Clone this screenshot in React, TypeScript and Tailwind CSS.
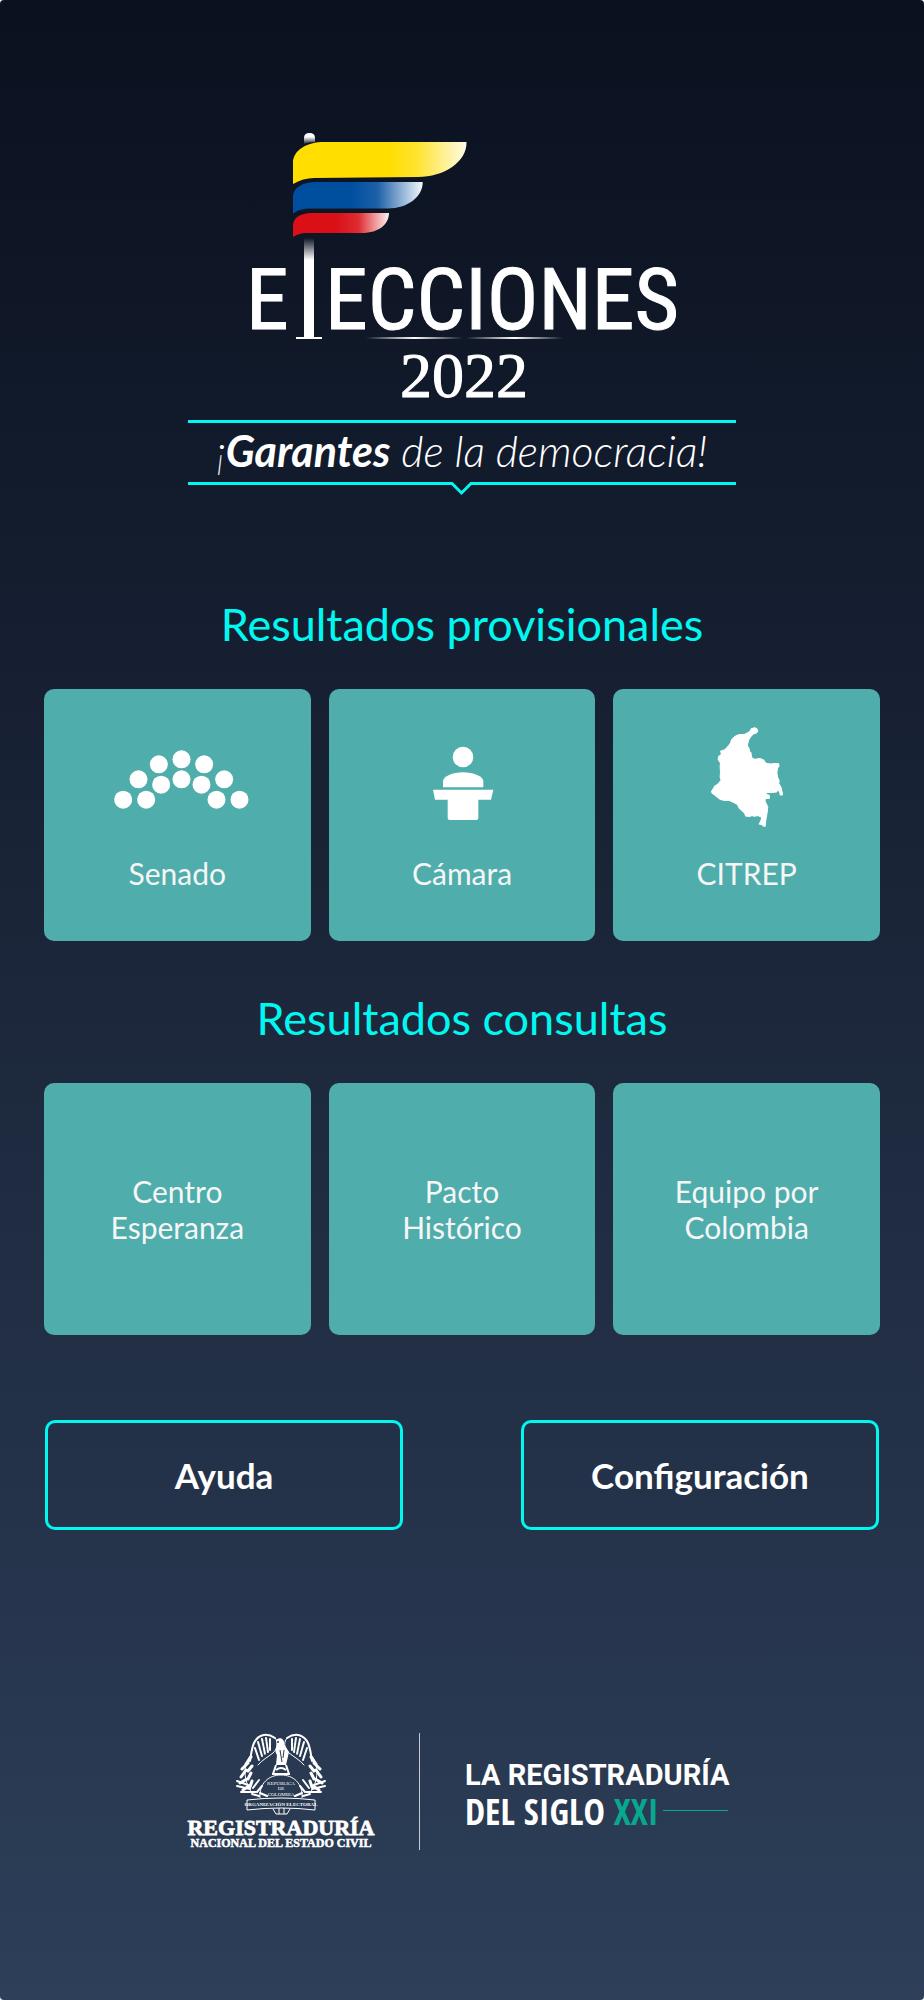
import React from 'react';

interface Tile {
  label: string;
  icon?: React.ReactNode;
}

const SenateIcon: React.FC = () => {
  const seats = [
    [279, 625], [348, 625], [325, 564], [386, 519], [393, 580], [454, 504],
    [454, 564], [522, 519], [514, 580], [582, 564], [559, 625], [628, 625],
  ];

  return (
    <svg viewBox="228 464 428 189" className="w-[143px] h-[63px]" fill="white" aria-hidden="true">
      {seats.map(([cx, cy]) => (
        <circle key={`${cx}-${cy}`} cx={cx} cy={cy} r="27" />
      ))}
    </svg>
  );
};

const PodiumIcon: React.FC = () => (
  <svg viewBox="332 161 198 261" className="w-[66px] h-[87px]" fill="white" aria-hidden="true">
    <circle cx="434" cy="230" r="31" />
    <path d="M374 321V303C374 288 403 276 434 276S495 288 495 303V321Z" />
    <path d="M344 328H525L518 358H480V413Q480 419 474 419H394Q388 419 388 413V358H350Z" />
  </svg>
);

const ColombiaIcon: React.FC = () => (
  <svg viewBox="330 136 220 304" className="w-[74px] h-[102px]" fill="white" stroke="white" strokeWidth="3" strokeLinejoin="round" aria-hidden="true">
    <path d="M463 141L470 145L472 152L466 158L458 160L451 168L446 175L443 185L441 195L446 203L448 212L452 216L453 226L456 233L464 235L478 233L489 237L497 247L510 249L522 248L533 248L536 254L531 262L529 275L531 288L536 300L534 307L541 318L546 338L545 342L539 342L538 335L533 325L528 333L512 334L497 334L497 340L506 342L507 351L494 353L494 361L502 377L500 394L496 417L494 435L488 434L486 430L476 428L481 420L484 408L473 403L462 405L455 403L447 406L436 404L433 396L425 388L417 381L411 369L401 364L388 358L374 358L361 355L347 344L336 336L334 331L340 322L343 316L354 309L363 297L360 288L361 272L360 257L361 246L354 236L355 228L364 220L361 211L374 207L385 195L391 187L394 177L402 169L409 164L418 161L432 161L441 157L449 151L453 144Z" />
  </svg>
);

const ElectionLogo: React.FC = () => (
  <svg viewBox="247 130 430 270" className="w-[430px] h-[270px] overflow-visible" role="img" aria-label="Elecciones 2022">
    <defs>
      <linearGradient id="yellow">
        <stop offset="0.55" stopColor="#ffde00" />
        <stop offset="0.72" stopColor="#ffe332" />
        <stop offset="1" stopColor="#fffbe6" />
      </linearGradient>
      <linearGradient id="blue">
        <stop offset="0.45" stopColor="#004f9f" />
        <stop offset="0.65" stopColor="#1c60a8" />
        <stop offset="1" stopColor="#f4f8fc" />
      </linearGradient>
      <linearGradient id="red">
        <stop offset="0.45" stopColor="#da1016" />
        <stop offset="0.68" stopColor="#de2c32" />
        <stop offset="1" stopColor="#fdf0f0" />
      </linearGradient>
      <linearGradient id="knob" x1="0" y1="0" x2="0" y2="1">
        <stop offset="0.35" stopColor="white" />
        <stop offset="1" stopColor="white" stopOpacity="0.05" />
      </linearGradient>
      <linearGradient id="pole" x1="0" y1="0" x2="0" y2="1">
        <stop offset="0" stopColor="white" stopOpacity="0" />
        <stop offset="0.22" stopColor="white" />
      </linearGradient>
      <linearGradient id="flare">
        <stop offset="0" stopColor="white" stopOpacity="0" />
        <stop offset="0.5" stopColor="white" />
        <stop offset="1" stopColor="white" stopOpacity="0" />
      </linearGradient>
    </defs>

    {/* Flag */}
    <path d="M304 144V138Q304 133 309.500 133T315 138V142Q309 142 304 144Z" fill="url(#knob)" />
    <path d="M293 184V163C293 150 307 142 324 142H466.500C467 162 444 177 418 177L314 178Q303 178 293 184Z" fill="url(#yellow)" />
    <path d="M293 213.500V197C293 188 302 182 317 182H422.700C423 197 407 208.500 388 208.500H310Q300 208.500 293 213.500Z" fill="url(#blue)" />
    <path d="M293 237V226C293 218 300 213 312 213H389C389 224 379 233 362 233H306Q299 233 293 237Z" fill="url(#red)" />

    {/* Flagpole */}
    <rect x="304" y="238" width="10" height="100" fill="url(#pole)" />
    <rect x="296" y="337" width="26" height="2" fill="white" />

    <g fill="white" stroke="white" strokeWidth="1" className="font-['Roboto_Condensed',sans-serif] text-[86px]">
      <text x="246" y="329">E</text>
      <text x="325" y="329">ECCIONES</text>
    </g>
    <rect x="366" y="337" width="97" height="2" fill="url(#flare)" />
    <rect x="466" y="337" width="97" height="2" fill="url(#flare)" />
    <text x="400" y="397" fill="white" stroke="white" strokeWidth="1" className="font-['Liberation_Serif',serif] text-[64px]">2022</text>
  </svg>
);

const RegistraduriaLogo: React.FC = () => (
  <svg viewBox="187 1733 187 117" className="w-[187px] h-[117px] overflow-visible" role="img" aria-label="Registraduría Nacional del Estado Civil">
    {/* One half of the wreath and wing, mirrored for the other */}
    <defs>
      <g id="half" fill="none" stroke="white" strokeLinecap="round">
        <path d="M275 1738C266 1732 258 1735 254 1743C251 1750 251 1757 250 1761" strokeWidth="2" />
        <path d="M275 1738C280 1744 276 1750 273 1753C268 1757 262 1760 258 1765" strokeWidth="1" />
        <path d="M258 1742L262 1756M262 1739L265 1754M266 1738L268 1752M270 1739L270 1750M255 1748L259 1760" strokeWidth="2" strokeDasharray="3 1" />
        <path d="M250 1756C243 1765 243 1780 252 1793" strokeWidth="1" />
        <path d="M251 1757L246 1764M248 1763L242 1769M252 1766L248 1771M246 1770L241 1777M251 1773L248 1779M247 1779L240 1783M252 1781L250 1787M249 1786L243 1790" strokeWidth="3" />
        <path d="M253 1788L259 1780M257 1792L262 1786M252 1794L259 1796M260 1793L267 1796" strokeWidth="2" />
        <path d="M237 1781L248 1785M237 1786L250 1789M241 1792L256 1792" strokeWidth="2" />
      </g>
    </defs>
    <use href="#half" />
    <use href="#half" transform="translate(562 0) scale(-1 1)" />

    <path d="M276 1740C280 1736 285 1739 284 1744L289 1752L286 1765H276L277 1755C273 1750 278 1747 276 1740Z" fill="white" />
    <circle cx="278" cy="1742" r="1" fill="#283850" />
    <path d="M280 1750L282 1762M284 1750L283 1758" stroke="#283850" strokeWidth="1" />
    <path d="M276 1765L273 1774M286 1765L289 1774M272 1774H290M276 1770Q281 1766 286 1770" stroke="white" strokeWidth="2" fill="none" />
    <path d="M260 1798C259 1783 269 1775 281 1775S303 1783 302 1798" stroke="white" strokeWidth="1" fill="none" />
    <g fill="white" textAnchor="middle" className="font-['Liberation_Serif',serif] text-[5px]">
      <text x="281" y="1785">REPÚBLICA</text>
      <text x="281" y="1790">DE</text>
      <text x="281" y="1796">COLOMBIA</text>
    </g>
    <path d="M247 1800Q281 1796 315 1800V1810Q281 1806 247 1810Z" fill="#283850" stroke="white" strokeWidth="1" />
    <text x="281" y="1806" fill="white" textAnchor="middle" className="font-['Liberation_Serif',serif] font-bold text-[5px]">ORGANIZACIÓN ELECTORAL</text>
    <path d="M273 1809L276 1814H287L290 1809M279 1808V1814M284 1808V1814" stroke="white" strokeWidth="1" fill="none" />

    <g fill="white" stroke="white" textAnchor="middle" className="font-['Liberation_Serif',serif] font-bold">
      <text x="281" y="1835" strokeWidth="0.800" className="text-[22px]">REGISTRADURÍA</text>
      <text x="281" y="1847" strokeWidth="0.500" className="text-[12px]">NACIONAL DEL ESTADO CIVIL</text>
    </g>
  </svg>
);

const SectionTitle: React.FC<{ children: React.ReactNode }> = ({ children }) => (
  <h2 className="text-center text-[45px] leading-[56px] text-[#00f8f0]">{children}</h2>
);

const TileButton: React.FC<{ tile: Tile }> = ({ tile }) => (
  <button
    type="button"
    className="flex h-[252px] flex-1 flex-col items-center rounded-[10px] bg-[#4fadac] text-[30px] leading-9 text-[#f6f6f6]"
  >
    {tile.icon ? (
      <>
        <span className="mt-[37px] flex h-[102px] items-center">{tile.icon}</span>
        <span className="mt-[27px]">{tile.label}</span>
      </>
    ) : (
      <span className="my-auto w-40">{tile.label}</span>
    )}
  </button>
);

const results: Tile[] = [
  { label: 'Senado', icon: <SenateIcon /> },
  { label: 'Cámara', icon: <PodiumIcon /> },
  { label: 'CITREP', icon: <ColombiaIcon /> },
];

const primaries: Tile[] = [
  { label: 'Centro Esperanza' },
  { label: 'Pacto Histórico' },
  { label: 'Equipo por Colombia' },
];

const actions = ['Ayuda', 'Configuración'];

export default function App() {
  return (
    <main className="min-h-screen rounded-[4px] bg-linear-to-b from-[#0a111f] via-[#1c273b] to-[#2d3f59] pt-[130px] pb-[149px] font-['Lato',sans-serif]">
      {/* Header */}
      <header className="flex flex-col items-center">
        <h1>
          <ElectionLogo />
        </h1>
        <div className="mt-5 w-[548px] border-t-[3px] border-[#00f8f0]">
          <p className="text-center text-[43px] leading-[56px] font-light italic text-white">
            ¡<strong className="font-bold">Garantes</strong> de la democracia!
          </p>
          <svg viewBox="0 0 548 15" className="mt-0.5 h-[15px] w-full" fill="none" stroke="#00f8f0" strokeWidth="3" aria-hidden="true">
            <path d="M0 2.500H264L273.500 12L283 2.500H548" />
          </svg>
        </div>
      </header>

      {/* Results */}
      <section className="mt-[100px] px-11">
        <SectionTitle>Resultados provisionales</SectionTitle>
        <div className="mt-[37px] flex gap-[18px]">
          {results.map((tile) => (
            <TileButton key={tile.label} tile={tile} />
          ))}
        </div>
      </section>

      <section className="mt-[49px] px-11">
        <SectionTitle>Resultados consultas</SectionTitle>
        <div className="mt-[37px] flex gap-[18px]">
          {primaries.map((tile) => (
            <TileButton key={tile.label} tile={tile} />
          ))}
        </div>
      </section>

      {/* Actions */}
      <nav className="mt-[85px] flex gap-[118px] px-[45px]">
        {actions.map((action) => (
          <button
            key={action}
            type="button"
            className="h-[110px] flex-1 rounded-[10px] border-[3px] border-[#00f8f0] text-[35px] font-bold text-white"
          >
            {action}
          </button>
        ))}
      </nav>

      {/* Footer */}
      <footer className="mt-[203px] flex justify-center gap-[45px]">
        <RegistraduriaLogo />
        <div className="w-px bg-[#c5cad2]" />
        <svg viewBox="465 1733 272 117" className="h-[117px] w-[272px] overflow-visible" role="img" aria-label="La Registraduría del siglo XXI">
          <text x="465" y="1785" fill="white" className="font-['Roboto',sans-serif] text-[29px] font-bold">LA REGISTRADURÍA</text>
          <text x="465" y="1825" fill="white" className="font-['Open_Sans_Condensed',sans-serif] text-[36px] font-bold">
            DEL SIGLO <tspan fill="#08a88f">XXI</tspan>
          </text>
          <path d="M663 1810.500H728" stroke="#08a88f" strokeWidth="1" />
        </svg>
      </footer>
    </main>
  );
}
